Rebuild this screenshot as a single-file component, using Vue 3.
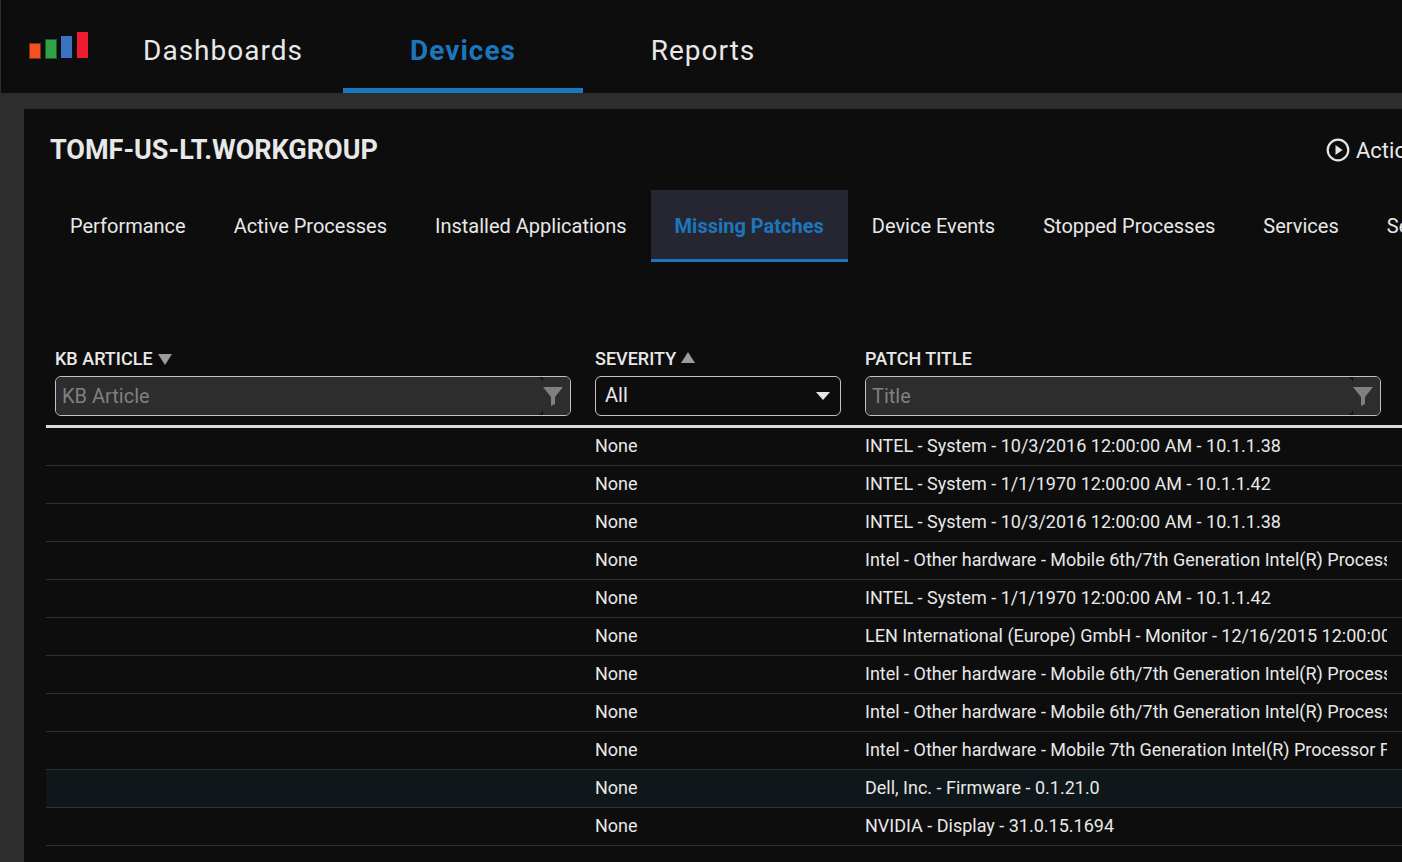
<script setup>
import { ref } from 'vue'

const navItems = ['Dashboards', 'Devices', 'Reports']
const activeNav = ref('Devices')

const tabs = [
  'Performance',
  'Active Processes',
  'Installed Applications',
  'Missing Patches',
  'Device Events',
  'Stopped Processes',
  'Services',
  'Security',
]
const activeTab = ref('Missing Patches')

const article = ref('')
const severity = ref('All')
const title = ref('')

const patches = [
  { severity: 'None', title: 'INTEL - System - 10/3/2016 12:00:00 AM - 10.1.1.38' },
  { severity: 'None', title: 'INTEL - System - 1/1/1970 12:00:00 AM - 10.1.1.42' },
  { severity: 'None', title: 'INTEL - System - 10/3/2016 12:00:00 AM - 10.1.1.38' },
  { severity: 'None', title: 'Intel - Other hardware - Mobile 6th/7th Generation Intel(R) Processor' },
  { severity: 'None', title: 'INTEL - System - 1/1/1970 12:00:00 AM - 10.1.1.42' },
  { severity: 'None', title: 'LEN International (Europe) GmbH - Monitor - 12/16/2015 12:00:00 AM' },
  { severity: 'None', title: 'Intel - Other hardware - Mobile 6th/7th Generation Intel(R) Processor' },
  { severity: 'None', title: 'Intel - Other hardware - Mobile 6th/7th Generation Intel(R) Processor' },
  { severity: 'None', title: 'Intel - Other hardware - Mobile 7th Generation Intel(R) Processor Family' },
  { severity: 'None', title: 'Dell, Inc. - Firmware - 0.1.21.0', highlighted: true },
  { severity: 'None', title: 'NVIDIA - Display - 31.0.15.1694' },
]
</script>

<template>
  <div class="page">
    <header class="topbar">
      <svg class="logo" width="60" height="28" viewBox="0 0 60 28" aria-hidden="true">
        <rect x="0.5" y="11.5" width="11" height="15" fill="#f4511e" stroke="#7a2f18" />
        <rect x="16.5" y="7.5" width="11" height="19" fill="#2fa344" stroke="#1c5a2a" />
        <rect x="32" y="4" width="11" height="22" fill="#3a72c4" />
        <rect x="48" y="0" width="11" height="26" fill="#ee1c2e" />
      </svg>
      <nav class="nav">
        <a
          v-for="item in navItems"
          :key="item"
          href="#"
          class="nav-link"
          :class="{ active: item === activeNav }"
          @click.prevent="activeNav = item"
        >{{ item }}</a>
      </nav>
    </header>

    <main class="panel">
      <div class="heading">
        <h1>TOMF-US-LT.WORKGROUP</h1>
        <button type="button" class="actions">
          <svg width="24" height="24" viewBox="0 0 24 24" aria-hidden="true">
            <circle cx="12" cy="12" r="10.3" fill="none" stroke="#e6e6e6" stroke-width="2.2" />
            <path d="M9.5 7v10l7-5z" fill="#e6e6e6" />
          </svg>
          <span>Actions</span>
        </button>
      </div>

      <nav class="tabs">
        <a
          v-for="tab in tabs"
          :key="tab"
          href="#"
          class="tab"
          :class="{ active: tab === activeTab }"
          @click.prevent="activeTab = tab"
        >{{ tab }}</a>
      </nav>

      <table class="patches">
        <colgroup>
          <col class="col-wide" />
          <col class="col-narrow" />
          <col class="col-wide" />
          <col class="col-spare" />
        </colgroup>
        <thead>
          <tr>
            <th scope="col">
              <label class="label" for="article">
                KB ARTICLE
                <svg width="14" height="14" viewBox="0 0 14 14" aria-hidden="true">
                  <path d="M0 2h14L7 13z" fill="#9c9c9c" />
                </svg>
              </label>
              <div class="filter">
                <input id="article" v-model="article" type="text" placeholder="KB Article" />
                <button type="button" aria-label="Filter by KB article">
                  <svg width="20" height="20" viewBox="0 0 20 20" aria-hidden="true">
                    <path d="M0 0h20l-8 10v7l-4 2v-9z" fill="#808080" />
                  </svg>
                </button>
              </div>
            </th>
            <th scope="col">
              <label class="label" for="severity">
                SEVERITY
                <svg width="14" height="14" viewBox="0 0 14 14" aria-hidden="true">
                  <path d="M0 11h14L7 0z" fill="#9c9c9c" />
                </svg>
              </label>
              <div class="choice">
                <select id="severity" v-model="severity">
                  <option>All</option>
                  <option>None</option>
                </select>
                <svg class="caret" width="14" height="8" viewBox="0 0 14 8" aria-hidden="true">
                  <path d="M0 0h14L7 8z" fill="#e6e6e6" />
                </svg>
              </div>
            </th>
            <th scope="col">
              <label class="label" for="title">PATCH TITLE</label>
              <div class="filter">
                <input id="title" v-model="title" type="text" placeholder="Title" />
                <button type="button" aria-label="Filter by title">
                  <svg width="20" height="20" viewBox="0 0 20 20" aria-hidden="true">
                    <path d="M0 0h20l-8 10v7l-4 2v-9z" fill="#808080" />
                  </svg>
                </button>
              </div>
            </th>
            <td class="spare"></td>
          </tr>
        </thead>
        <tbody>
          <tr v-for="(patch, index) in patches" :key="index" :class="{ highlighted: patch.highlighted }">
            <td></td>
            <td>{{ patch.severity }}</td>
            <td><div class="clip">{{ patch.title }}</div></td>
            <td class="spare"></td>
          </tr>
        </tbody>
      </table>
    </main>
  </div>
</template>

<style>
body {
  background: #2d2d2d;
}
</style>

<style scoped>
.page {
  display: flex;
  flex-direction: column;
  min-height: 100vh;
  overflow: hidden;
  color: #e8e8e8;
  font-family: Roboto, "Liberation Sans", sans-serif;
}

.page *,
.page {
  box-sizing: border-box;
}

.topbar {
  display: flex;
  align-items: stretch;
  height: 93px;
  margin-left: 1px;
  padding-left: 28px;
  background: #0d0d0d;
}

.logo {
  flex: none;
  margin: 32px 14px 0 0;
}

.nav {
  display: flex;
}

.nav-link {
  display: flex;
  align-items: center;
  justify-content: center;
  width: 240px;
  padding-top: 13px;
  border-bottom: 5px solid transparent;
  color: #e8e8e8;
  font-size: 28px;
  letter-spacing: 1px;
  line-height: 36px;
  text-decoration: none;
}

.nav-link.active {
  border-color: #1c76bc;
  color: #1c76bc;
  font-weight: 700;
}

.panel {
  flex: 1;
  margin: 16px 0 0 24px;
  padding: 21px 0 0 22px;
  background: #0d0d0d;
}

.heading {
  display: flex;
  align-items: center;
  justify-content: space-between;
  height: 40px;
  padding-left: 4px;
}

h1 {
  margin: 0;
  font-size: 27px;
  font-weight: 700;
  line-height: 32px;
}

.actions {
  display: flex;
  flex: none;
  align-items: center;
  gap: 6px;
  width: 76px;
  padding: 0;
  overflow: hidden;
  border: 0;
  background: none;
  color: inherit;
  font: inherit;
  font-size: 22px;
  line-height: 32px;
}

.actions svg {
  flex: none;
}

.actions span {
  padding-top: 2px;
}

.tabs {
  display: flex;
  margin-top: 20px;
  overflow: hidden;
}

.tab {
  flex: none;
  height: 72px;
  padding: 0 24px;
  border-bottom: 3px solid transparent;
  color: #e8e8e8;
  font-size: 20px;
  line-height: 72px;
  text-decoration: none;
  white-space: nowrap;
}

.tab.active {
  border-color: #1c76bc;
  background: #262633;
  color: #1c76bc;
  font-weight: 700;
}

.patches {
  width: 100%;
  margin-top: 85px;
  border-collapse: separate;
  border-spacing: 0;
  table-layout: fixed;
  font-size: 18px;
}

.col-wide {
  width: 40%;
}

.col-narrow {
  width: 20%;
}

.col-spare {
  width: 6px;
}

th {
  padding: 0 15px 9px 9px;
  border-bottom: 3px solid #dedada;
  text-align: left;
}

.label {
  display: flex;
  align-items: center;
  gap: 5px;
  height: 24px;
  margin-bottom: 5px;
  font-weight: 500;
  line-height: 24px;
}

.filter {
  display: flex;
  height: 40px;
  overflow: hidden;
  border: 1px solid #c2c2c2;
  border-radius: 6px;
}

.filter input {
  flex: 1;
  min-width: 0;
  padding: 0 6px;
  border: 0;
  border-radius: 6px;
  outline: 0;
  background: #2d2d2d;
  color: #e8e8e8;
  font: inherit;
  font-size: 20px;
  font-weight: 400;
}

.filter input::placeholder {
  color: #808080;
  opacity: 1;
}

.filter button {
  display: flex;
  align-items: center;
  width: 27px;
  padding: 2px 0 0;
  border: 0;
  background: #2d2d2d;
}

.choice {
  display: grid;
  align-items: center;
}

.choice select,
.caret {
  grid-area: 1 / 1;
}

.choice select {
  width: 100%;
  height: 40px;
  padding: 0 9px 2px;
  appearance: none;
  border: 1px solid #c2c2c2;
  border-radius: 6px;
  background: #0d0d0d;
  color: #e8e8e8;
  font: inherit;
  font-size: 20px;
  font-weight: 400;
}

.caret {
  justify-self: end;
  margin-right: 11px;
  pointer-events: none;
}

td {
  height: 38px;
  padding: 0 9px 2px;
  border-bottom: 1px solid #2f2f2f;
  line-height: 24px;
}

td.spare {
  padding: 0;
}

thead td {
  border-bottom: 3px solid #dedada;
}

.clip {
  overflow: hidden;
  white-space: nowrap;
}

.highlighted {
  background: #10171a;
}
</style>
